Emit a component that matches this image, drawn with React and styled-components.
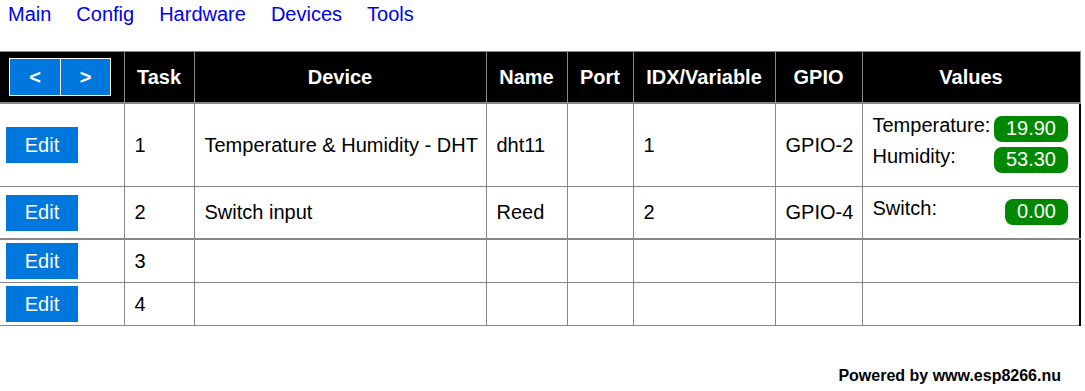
import React from 'react';
import styled, { createGlobalStyle } from 'styled-components';

const GlobalStyle = createGlobalStyle`
  body {
    margin: 0;
    background: #fff;
    font-family: 'Liberation Sans', Arial, sans-serif;
    color: #000;
  }
`;

const devices = [
  {
    task: 1,
    device: 'Temperature & Humidity - DHT',
    name: 'dht11',
    idx: '1',
    gpio: 'GPIO-2',
    values: [
      ['Temperature:', '19.90'],
      ['Humidity:', '53.30'],
    ],
  },
  {
    task: 2,
    device: 'Switch input',
    name: 'Reed',
    idx: '2',
    gpio: 'GPIO-4',
    values: [['Switch:', '0.00']],
    thick: true,
  },
  { task: 3 },
  { task: 4 },
];

const columns = [
  { w: 124 },
  { w: 70, label: 'Task' },
  { w: 292, label: 'Device' },
  { w: 81, label: 'Name' },
  { w: 66, label: 'Port' },
  { w: 142, label: 'IDX/Variable' },
  { w: 87, label: 'GPIO' },
  { w: 218, label: 'Values' },
];

export default function App() {
  return (
    <Page>
      <GlobalStyle />
      <Menu>
        <MenuLink href="#">Main</MenuLink>
        <MenuLink href="#">Config</MenuLink>
        <MenuLink href="#">Hardware</MenuLink>
        <MenuLink href="#">Devices</MenuLink>
        <MenuLink href="#">Tools</MenuLink>
      </Menu>
      <Table>
        <colgroup>
          {columns.map((c, i) => (
            <Col key={i} w={c.w} />
          ))}
        </colgroup>
        <thead>
          <tr>
            <Th>
              <Pager>
                <PageButton>&lt;</PageButton>
                <PageButton narrow>&gt;</PageButton>
              </Pager>
            </Th>
            {columns.slice(1).map((c) => (
              <Th key={c.label}>{c.label}</Th>
            ))}
          </tr>
        </thead>
        <tbody>
          {devices.map((d) => (
            <Row key={d.task} thick={d.thick}>
              <EditCell>
                <EditButton href="#">Edit</EditButton>
              </EditCell>
              <Td>{d.task}</Td>
              <Td>{d.device}</Td>
              <Td>{d.name}</Td>
              <Td></Td>
              <Td>{d.idx}</Td>
              <Td>{d.gpio}</Td>
              <ValuesCell>
                {(d.values || []).map(([label, value]) => (
                  <ValueLine key={label}>
                    <ValueLabel>{label}</ValueLabel>
                    <Badge>{value}</Badge>
                  </ValueLine>
                ))}
              </ValuesCell>
            </Row>
          ))}
        </tbody>
      </Table>
      <Footer>Powered by www.esp8266.nu</Footer>
    </Page>
  );
}

const Page = styled.div`
  width: 1085px;
`;

const Menu = styled.nav`
  display: flex;
  gap: 25px;
  padding: 3px 8px 0;
  height: 23px;
  font-size: 20px;
  line-height: 23px;
`;

const MenuLink = styled.a`
  color: #0000ee;
  text-decoration: none;
`;

const Table = styled.table`
  margin-top: 25px;
  width: 1080px;
  border-collapse: collapse;
  table-layout: fixed;
  font-size: 20px;
  line-height: 23px;
`;

const Col = styled.col`
  width: ${(p) => p.w}px;
`;

const Th = styled.th`
  height: 50px;
  padding: 0;
  background: #000;
  color: #fff;
  font-weight: bold;
  text-align: center;
  vertical-align: middle;
  border: 1px solid #888;
  border-bottom: 2px solid #888;

  &:first-child {
    border-left: none;
  }
`;

const Pager = styled.div`
  display: flex;
  gap: 1px;
  width: max-content;
  margin-left: 9px;
  padding: 1px;
  background: #fff;
`;

const PageButton = styled.span`
  display: flex;
  align-items: center;
  justify-content: center;
  width: ${(p) => (p.narrow ? 49 : 50)}px;
  height: 36px;
  background: #0077dd;
  color: #fff;
  font-weight: bold;
`;

const Row = styled.tr`
  & > td {
    border-bottom: ${(p) => (p.thick ? 2 : 1)}px solid #888;
  }
`;

const Td = styled.td`
  padding: 3px 10px;
  vertical-align: middle;
  border: 1px solid #888;
  white-space: nowrap;
  overflow: hidden;
`;

const EditCell = styled(Td)`
  padding: 3px 6px;
  border-left: none;
`;

const EditButton = styled.a`
  display: flex;
  align-items: center;
  justify-content: center;
  width: 72px;
  height: 36px;
  background: #0077dd;
  color: #fff;
  text-decoration: none;
`;

const ValuesCell = styled(Td)`
  padding: 10px 10px 10px 10px;
  border-right: 2px solid #000 !important;
`;

const ValueLine = styled.div`
  display: flex;
  justify-content: space-between;
  align-items: flex-start;
  height: 31px;
`;

const ValueLabel = styled.span`
  line-height: 23px;
`;

const Badge = styled.span`
  margin: 2px 1px 0 0;
  padding: 0 12px 2px;
  line-height: 24px;
  border-radius: 8px;
  background: #008800;
  color: #fff;
`;

const Footer = styled.div`
  margin-top: 41px;
  padding-right: 24px;
  text-align: right;
  font-size: 16px;
  font-weight: bold;
  line-height: 18px;
`;
